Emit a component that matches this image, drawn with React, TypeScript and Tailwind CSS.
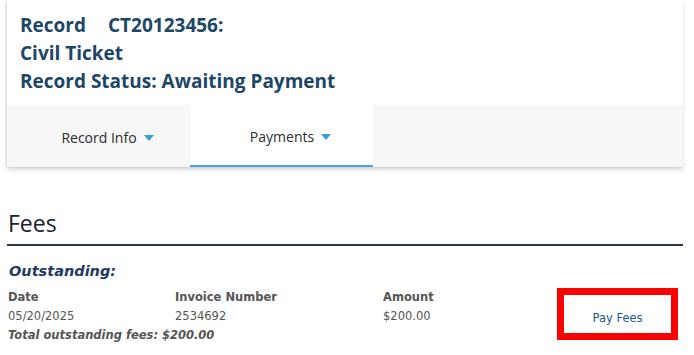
import { ReactNode } from "react";

function Caret() {
  return (
    <svg width="10" height="6" viewBox="0 0 10 6" className="ml-[7px] inline-block">
      <path d="M0 0 L10 0 L5 6 Z" fill="#3a9be2" />
    </svg>
  );
}

function Tab({ children, active }: { children: ReactNode; active?: boolean }) {
  return (
    <div
      className={`w-[183px] flex items-center justify-center pl-[18px] pt-[3px] text-[14px] text-[#2b2b2b] ${
        active ? "bg-white border-b-2 border-[#4ba3e3]" : ""
      }`}
    >
      {children}
      <Caret />
    </div>
  );
}

const small = { fontFamily: '"DejaVu Sans", Verdana, sans-serif' };

export default function App() {
  return (
    <div
      className="w-[694px] h-[355px] bg-white overflow-hidden"
      style={{ fontFamily: '"Open Sans", "Liberation Sans", sans-serif' }}
    >
      {/* Record card */}
      <div className="ml-[7px] w-[676px] shadow-[-1px_0_2px_rgba(0,0,0,0.12),0_3px_4px_rgba(0,0,0,0.14)]">
        <div className="pt-[11px] pb-[10px] px-[13px] text-[19px] leading-[28px] font-bold text-[#1d4667]">
          <div>
            Record<span className="ml-[22px]">CT20123456:</span>
          </div>
          <div>Civil Ticket</div>
          <div>Record Status: Awaiting Payment</div>
        </div>
        <div className="h-[62px] bg-[#f7f7f7] flex">
          <Tab>Record Info</Tab>
          <Tab active>Payments</Tab>
        </div>
      </div>

      {/* Fees */}
      <div className="ml-[7px] w-[676px] mt-[41px]">
        <div className="text-[23px] leading-[30px] pb-[6px] pl-[1px] font-medium text-[#1a2030] border-b-2 border-[#2d3550]">
          Fees
        </div>
        <div
          className="mt-[15px] pl-[2px] text-[14.5px] leading-[20px] font-bold italic text-[#1f3b63]"
          style={small}
        >
          Outstanding:
        </div>
        <div className="flex mt-[7px] text-[11.5px] leading-[19px] text-[#555]" style={small}>
          <div className="w-[550px] pl-[1px]">
            <div className="flex">
              <div className="w-[167px]">
                <div className="font-bold">Date</div>
                <div>05/20/2025</div>
              </div>
              <div className="w-[208px]">
                <div className="font-bold">Invoice Number</div>
                <div>2534692</div>
              </div>
              <div>
                <div className="font-bold">Amount</div>
                <div>$200.00</div>
              </div>
            </div>
            <div className="font-bold italic">Total outstanding fees: $200.00</div>
          </div>
          <div className="w-[121px] h-[52px] border-[7px] border-[#ff0000] flex items-center justify-center pt-[8px] text-[#1f5a86]">
            Pay Fees
          </div>
        </div>
      </div>
    </div>
  );
}
